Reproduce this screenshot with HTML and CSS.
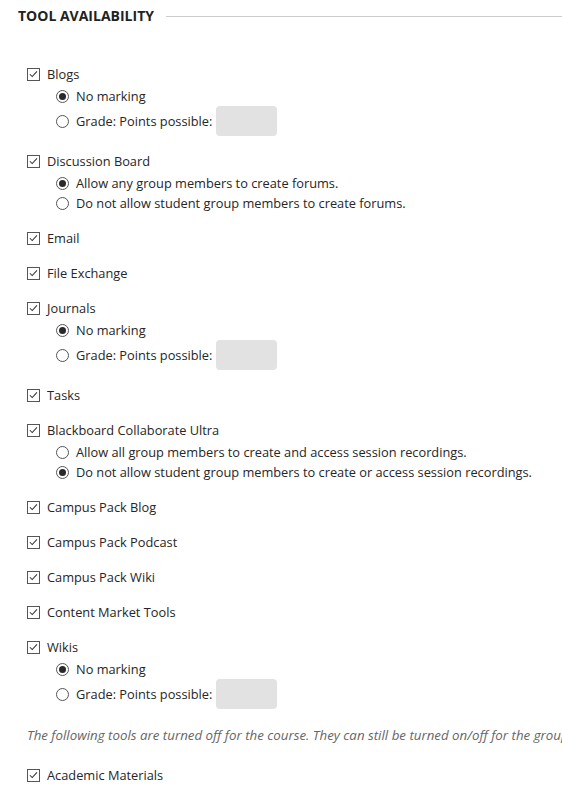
FILE: index.html
```html
<!DOCTYPE html>
<html lang="en">
<head>
<meta charset="utf-8">
<title>Tool Availability</title>
<link rel="stylesheet" href="styles.css">
</head>
<body>
<div class="page">
  <div class="section-head">
    <h2 class="section-title">Tool Availability</h2>
    <span class="section-rule"></span>
  </div>

  <ul class="tools">
    <li class="tool">
      <div class="tool-label"><span class="cb"><svg viewBox="0 0 13 13"><path d="M2.2 6.2 L5 9 L10.6 2.8" /></svg></span>Blogs</div>
      <div class="opts">
        <div class="opt"><span class="rb on"></span>No marking</div>
        <div class="opt opt-grade"><span class="rb"></span>Grade: Points possible:<span class="pts"></span></div>
      </div>
    </li>
    <li class="tool">
      <div class="tool-label"><span class="cb"><svg viewBox="0 0 13 13"><path d="M2.2 6.2 L5 9 L10.6 2.8" /></svg></span>Discussion Board</div>
      <div class="opts">
        <div class="opt"><span class="rb on"></span>Allow any group members to create forums.</div>
        <div class="opt"><span class="rb"></span>Do not allow student group members to create forums.</div>
      </div>
    </li>
    <li class="tool">
      <div class="tool-label"><span class="cb"><svg viewBox="0 0 13 13"><path d="M2.2 6.2 L5 9 L10.6 2.8" /></svg></span>Email</div>
    </li>
    <li class="tool">
      <div class="tool-label"><span class="cb"><svg viewBox="0 0 13 13"><path d="M2.2 6.2 L5 9 L10.6 2.8" /></svg></span>File Exchange</div>
    </li>
    <li class="tool">
      <div class="tool-label"><span class="cb"><svg viewBox="0 0 13 13"><path d="M2.2 6.2 L5 9 L10.6 2.8" /></svg></span>Journals</div>
      <div class="opts">
        <div class="opt"><span class="rb on"></span>No marking</div>
        <div class="opt opt-grade"><span class="rb"></span>Grade: Points possible:<span class="pts"></span></div>
      </div>
    </li>
    <li class="tool">
      <div class="tool-label"><span class="cb"><svg viewBox="0 0 13 13"><path d="M2.2 6.2 L5 9 L10.6 2.8" /></svg></span>Tasks</div>
    </li>
    <li class="tool">
      <div class="tool-label"><span class="cb"><svg viewBox="0 0 13 13"><path d="M2.2 6.2 L5 9 L10.6 2.8" /></svg></span>Blackboard Collaborate Ultra</div>
      <div class="opts">
        <div class="opt"><span class="rb"></span>Allow all group members to create and access session recordings.</div>
        <div class="opt"><span class="rb on"></span>Do not allow student group members to create or access session recordings.</div>
      </div>
    </li>
    <li class="tool">
      <div class="tool-label"><span class="cb"><svg viewBox="0 0 13 13"><path d="M2.2 6.2 L5 9 L10.6 2.8" /></svg></span>Campus Pack Blog</div>
    </li>
    <li class="tool">
      <div class="tool-label"><span class="cb"><svg viewBox="0 0 13 13"><path d="M2.2 6.2 L5 9 L10.6 2.8" /></svg></span>Campus Pack Podcast</div>
    </li>
    <li class="tool">
      <div class="tool-label"><span class="cb"><svg viewBox="0 0 13 13"><path d="M2.2 6.2 L5 9 L10.6 2.8" /></svg></span>Campus Pack Wiki</div>
    </li>
    <li class="tool">
      <div class="tool-label"><span class="cb"><svg viewBox="0 0 13 13"><path d="M2.2 6.2 L5 9 L10.6 2.8" /></svg></span>Content Market Tools</div>
    </li>
    <li class="tool">
      <div class="tool-label"><span class="cb"><svg viewBox="0 0 13 13"><path d="M2.2 6.2 L5 9 L10.6 2.8" /></svg></span>Wikis</div>
      <div class="opts">
        <div class="opt"><span class="rb on"></span>No marking</div>
        <div class="opt opt-grade"><span class="rb"></span>Grade: Points possible:<span class="pts"></span></div>
      </div>
    </li>
  </ul>

  <p class="note">The following tools are turned off for the course. They can still be turned on/off for the group.</p>

  <ul class="tools tools-off">
    <li class="tool">
      <div class="tool-label"><span class="cb"><svg viewBox="0 0 13 13"><path d="M2.2 6.2 L5 9 L10.6 2.8" /></svg></span>Academic Materials</div>
    </li>
  </ul>
</div>
</body>
</html>
```

FILE: styles.css
```css
html, body {
  margin: 0;
  padding: 0;
  background: #fff;
}

body {
  font-family: "Open Sans", "Noto Sans", sans-serif;
  font-size: 12.8px;
  color: #262626;
  overflow: hidden;
}

.page {
  width: 562px;
}

.section-head {
  display: flex;
  align-items: center;
  gap: 12px;
  height: 32px;
  padding-left: 18px;
}

.section-title {
  margin: 0;
  font-size: 14px;
  font-weight: 700;
  text-transform: uppercase;
  color: #222;
  line-height: 32px;
  white-space: nowrap;
}

.section-rule {
  flex: 1;
  height: 1px;
  background: #cccccc;
}

.tools {
  list-style: none;
  margin: 32px 0 0;
  padding: 0 0 0 27px;
}

.tool {
  margin-bottom: 15px;
}

.tool-label {
  display: flex;
  align-items: center;
  gap: 7px;
  height: 20px;
  white-space: nowrap;
}

.cb {
  width: 13px;
  height: 13px;
  box-sizing: border-box;
  border: 1px solid #555;
  background: #fff;
  flex: none;
  display: flex;
  margin-top: 1px;
}

.cb svg {
  width: 11px;
  height: 11px;
  fill: none;
  stroke: #333;
  stroke-width: 1.2;
}

.opts {
  margin: 2px 0 0 29px;
}

.opt {
  display: flex;
  align-items: center;
  gap: 7px;
  height: 20px;
  white-space: nowrap;
}

.opt-grade {
  height: 30px;
}

.rb {
  width: 13px;
  height: 13px;
  box-sizing: border-box;
  border: 1px solid #555;
  border-radius: 50%;
  flex: none;
  display: flex;
  align-items: center;
  justify-content: center;
  margin-top: 1px;
}

.rb.on::after {
  content: "";
  width: 7px;
  height: 7px;
  border-radius: 50%;
  background: #2a2a2a;
}

.pts {
  display: inline-block;
  width: 61px;
  height: 30px;
  margin-left: -3px;
  border-radius: 4px;
  background: #e2e2e2;
}

.note {
  margin: 16px 0 0;
  padding-left: 27px;
  font-size: 13.3px;
  font-style: italic;
  color: #666;
  line-height: 20px;
  white-space: nowrap;
}

.tools-off {
  margin-top: 20px;
}
```
